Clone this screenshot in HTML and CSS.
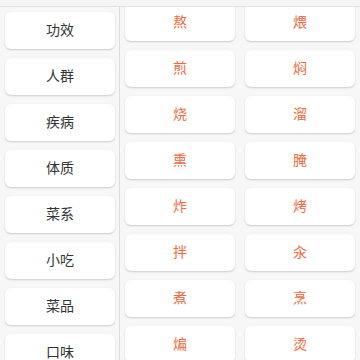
FILE: index.html
```html
<!DOCTYPE html>
<html lang="zh">
<head>
    <meta charset="UTF-8">
    <meta name="viewport" content="width=device-width, initial-scale=1.0">
    <title>分类</title>
    <link rel="stylesheet" href="styles.css">
</head>
<body>
    <div class="topbar"></div>
    <div class="main">
        <div class="side">
            <div class="side-item">功效</div>
            <div class="side-item">人群</div>
            <div class="side-item">疾病</div>
            <div class="side-item">体质</div>
            <div class="side-item">菜系</div>
            <div class="side-item">小吃</div>
            <div class="side-item">菜品</div>
            <div class="side-item">口味</div>
        </div>
        <div class="content">
            <div class="grid">
                <div class="tag">熬</div>
                <div class="tag">煨</div>
                <div class="tag">煎</div>
                <div class="tag">焖</div>
                <div class="tag">烧</div>
                <div class="tag">溜</div>
                <div class="tag">熏</div>
                <div class="tag">腌</div>
                <div class="tag">炸</div>
                <div class="tag">烤</div>
                <div class="tag">拌</div>
                <div class="tag">汆</div>
                <div class="tag">煮</div>
                <div class="tag">烹</div>
                <div class="tag">煸</div>
                <div class="tag">烫</div>
            </div>
        </div>
    </div>
</body>
</html>
```

FILE: styles.css
```css
body {
    margin: 0;
    width: 360px;
    height: 360px;
    overflow: hidden;
    background-color: #f7f7f7;
    font-family: "Noto Sans CJK SC", "Noto Sans", sans-serif;
    font-size: 14px;
}
.topbar {
    height: 6px;
    background-color: #f5f5f5;
    border-bottom: 1px solid #e2e2e2;
}
.main {
    display: flex;
    height: 353px;
}
.side {
    width: 110px;
    padding: 5px 4px 0 5px;
    border-right: 1px solid #dcdcdc;
    display: flex;
    flex-direction: column;
    gap: 9px;
    overflow: hidden;
}
.side-item,
.tag {
    flex-shrink: 0;
    box-sizing: border-box;
    height: 37px;
    padding-bottom: 3px;
    line-height: 1;
    display: flex;
    align-items: center;
    justify-content: center;
    background: #fff;
    border-radius: 6px;
    box-shadow: 0 1px 2px rgba(0,0,0,0.18);
}
.side-item {
    color: #333;
}
.content {
    flex: 1;
    overflow: hidden;
    padding: 0 5px;
}
.grid {
    margin-top: -3px;
    display: grid;
    grid-template-columns: 110px 110px;
    gap: 9px 10px;
}
.tag {
    color: #f06a3c;
}
```
